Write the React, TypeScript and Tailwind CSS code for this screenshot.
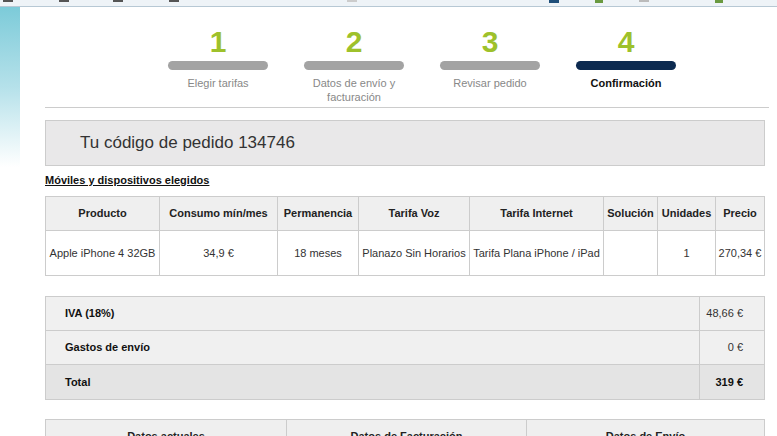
import React from 'react';

const STEPS = [
  { n: '1', label: 'Elegir tarifas', active: false },
  { n: '2', label: 'Datos de envío y facturación', active: false },
  { n: '3', label: 'Revisar pedido', active: false },
  { n: '4', label: 'Confirmación', active: true },
];

const COLS = [
  { title: 'Producto', value: 'Apple iPhone 4 32GB', w: 'w-[114px]' },
  { title: 'Consumo mín/mes', value: '34,9 €', w: 'w-[118px]' },
  { title: 'Permanencia', value: '18 meses', w: 'w-[81px]' },
  { title: 'Tarifa Voz', value: 'Planazo Sin Horarios', w: 'w-[111px]' },
  { title: 'Tarifa Internet', value: 'Tarifa Plana iPhone / iPad', w: 'w-[134px]' },
  { title: 'Solución', value: '', w: 'w-[54px]' },
  { title: 'Unidades', value: '1', w: 'w-[58px]' },
  { title: 'Precio', value: '270,34 €', w: 'flex-1' },
];

const TOTALS = [
  { label: 'IVA (18%)', value: '48,66 €', bg: 'bg-[#f0f0f0]', bold: false },
  { label: 'Gastos de envío', value: '0 €', bg: 'bg-[#f0f0f0]', bold: false },
  { label: 'Total', value: '319 €', bg: 'bg-[#e4e4e4]', bold: true },
];

const App: React.FC = () => {
  return (
    <div className="w-[777px] h-[436px] overflow-hidden bg-white font-['Liberation_Sans',Arial,sans-serif] text-[11px] text-[#222]">
      {/* browser toolbar remnant */}
      <div className="h-[7px] bg-[#eef3f7] border-b border-[#b7c8d4] flex items-start">
        <span className="ml-[3px] w-[10px] h-[2px] bg-[#555]" />
        <span className="ml-[46px] w-[10px] h-[2px] bg-[#555]" />
        <span className="ml-[44px] w-[10px] h-[2px] bg-[#555]" />
        <span className="ml-[46px] w-[10px] h-[2px] bg-[#555]" />
        <span className="ml-[168px] w-[10px] h-[2px] bg-[#ccc]" />
        <span className="ml-[192px] w-[10px] h-[3px] bg-[#1f4f7a]" />
        <span className="ml-[36px] w-[8px] h-[3px] bg-[#6a9a40]" />
        <span className="ml-[36px] w-[10px] h-[2px] bg-[#bbb]" />
        <span className="ml-[66px] w-[8px] h-[3px] bg-[#6a9a40]" />
      </div>

      <div className="flex">
        <div className="w-[20px] h-[160px] bg-gradient-to-b from-[#7ccbd9] via-[#b5e1ea] to-white" />

        <div className="pl-[25px] flex-1">
          {/* steps */}
          <div className="flex pl-[105px] pt-[20px]">
            {STEPS.map((s) => (
              <div key={s.n} className="w-[136px] flex flex-col items-center">
                <div className="text-[30px] leading-[30px] font-bold text-[#9ec12b]">{s.n}</div>
                <div
                  className={`mt-[4px] w-[100px] h-[9px] rounded-full ${s.active ? 'bg-[#0c2a50]' : 'bg-[#a3a3a3]'}`}
                />
                <div
                  className={`mt-[6px] w-[104px] text-center leading-[14px] ${
                    s.active ? 'font-bold text-[#111]' : 'text-[#888]'
                  }`}
                >
                  {s.label}
                </div>
              </div>
            ))}
          </div>

          <div className="mt-[3px] w-[724px] border-t border-[#cccccc]" />

          {/* order code */}
          <div className="mt-[12px] w-[720px] h-[46px] bg-[#e9e8e9] border border-[#cccccc] flex items-center pl-[34px]">
            <span className="text-[17px] text-[#333]">Tu código de pedido 134746</span>
          </div>

          <div className="mt-[8px] font-bold underline text-[#111] leading-[13px]">
            Móviles y dispositivos elegidos
          </div>

          {/* product table */}
          <div className="mt-[9px] w-[720px] border border-[#cccccc]">
            <div className="flex h-[34px] bg-[#efefef] border-b border-[#cccccc]">
              {COLS.map((c, i) => (
                <div
                  key={c.title}
                  className={`${c.w} shrink-0 flex items-center justify-center font-bold ${
                    i < COLS.length - 1 ? 'border-r border-[#cccccc]' : ''
                  }`}
                >
                  {c.title}
                </div>
              ))}
            </div>
            <div className="flex h-[44px] bg-white">
              {COLS.map((c, i) => (
                <div
                  key={c.title}
                  className={`${c.w} shrink-0 flex items-center justify-center whitespace-nowrap text-[#333] ${
                    i < COLS.length - 1 ? 'border-r border-[#cccccc]' : ''
                  }`}
                >
                  {c.value}
                </div>
              ))}
            </div>
          </div>

          {/* totals */}
          <div className="mt-[20px] w-[720px] border border-[#cccccc]">
            {TOTALS.map((t, i) => (
              <div
                key={t.label}
                className={`flex h-[34px] ${t.bg} ${i < TOTALS.length - 1 ? 'border-b border-[#cccccc]' : ''}`}
              >
                <div className="flex-1 flex items-center pl-[19px] font-bold text-[#111]">{t.label}</div>
                <div
                  className={`w-[65px] border-l border-[#cccccc] flex items-center justify-end pr-[21px] ${
                    t.bold ? 'font-bold text-[#111]' : 'text-[#333]'
                  }`}
                >
                  {t.value}
                </div>
              </div>
            ))}
          </div>

          {/* addresses */}
          <div className="mt-[19px] w-[720px] border border-[#cccccc] flex h-[40px] bg-[#efefef] font-bold leading-[13px]">
            <div className="w-[241px] border-r border-[#cccccc] flex justify-center pt-[10px]">Datos actuales</div>
            <div className="w-[240px] border-r border-[#cccccc] flex justify-center pt-[10px]">Datos de Facturación</div>
            <div className="flex-1 flex justify-center pt-[10px]">Datos de Envío</div>
          </div>
        </div>
      </div>
    </div>
  );
};

export default App;
